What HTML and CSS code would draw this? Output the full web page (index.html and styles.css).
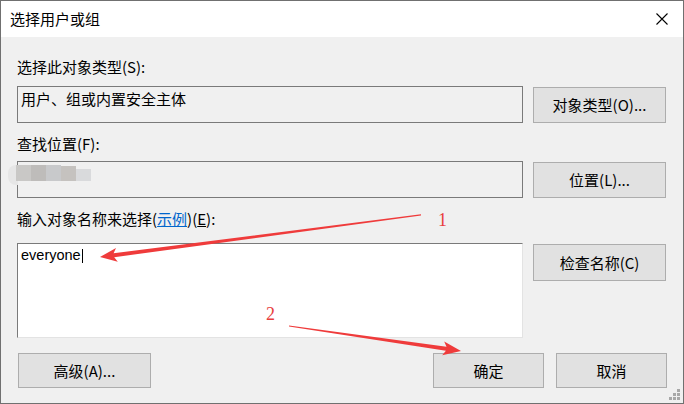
FILE: index.html
```html
<!DOCTYPE html>
<html lang="zh-CN">
<head>
<meta charset="utf-8">
<title>选择用户或组</title>
<link rel="stylesheet" href="styles.css">
</head>
<body>
<div class="window">
  <div class="titlebar">
    <span class="title">选择用户或组</span>
    <svg class="close" width="12" height="12" viewBox="0 0 12 12"><path d="M0.5 0.5 L11.5 11.5 M11.5 0.5 L0.5 11.5" stroke="#000" stroke-width="1.1" fill="none"/></svg>
  </div>
  <div class="content">
    <div class="label l1">选择此对象类型(S):</div>
    <div class="row r1">
      <div class="field">用户、组或内置安全主体</div>
      <button class="btn">对象类型(O)...</button>
    </div>
    <div class="label l2">查找位置(F):</div>
    <div class="row r2">
      <div class="field"></div>
      <button class="btn">位置(L)...</button>
    </div>
    <div class="label l3">输入对象名称来选择(<span class="link">示例</span>)(<u>E</u>):</div>
    <div class="row r3">
      <div class="textarea">everyone<span class="caret"></span></div>
      <button class="btn">检查名称(C)</button>
    </div>
    <div class="footer">
      <button class="btn wide">高级(A)...</button>
      <div class="spacer"></div>
      <button class="btn narrow">确定</button>
      <button class="btn narrow">取消</button>
    </div>
  </div>

  <div class="blur">
    <span class="b0"></span><span class="b1"></span><span class="b2"></span><span class="b3"></span><span class="b4"></span><span class="b5"></span>
  </div>

  <svg class="annot" width="684" height="404" viewBox="0 0 684 404">
    <polygon fill="#ef3b3b" points="421,214.3 113.6,253.2 116,247.9 100,257 117.8,261.7 114.2,257.2 421,215.6"/>
    <polygon fill="#ef3b3b" points="289,325.4 446.5,346.8 444.2,341.5 461,351 442.2,355.3 445.9,350.8 289,326.6"/>
  </svg>
  <span class="num n1">1</span>
  <span class="num n2">2</span>

  <svg class="grip" width="12" height="12" viewBox="0 0 12 12">
    <rect x="8" y="0" width="3" height="3" fill="#a8a8a8"/>
    <rect x="4" y="4" width="3" height="3" fill="#a8a8a8"/>
    <rect x="8" y="4" width="3" height="3" fill="#a8a8a8"/>
    <rect x="0" y="8" width="3" height="3" fill="#a8a8a8"/>
    <rect x="4" y="8" width="3" height="3" fill="#a8a8a8"/>
    <rect x="8" y="8" width="3" height="3" fill="#a8a8a8"/>
  </svg>
</div>
</body>
</html>
```
FILE: styles.css
```css
* { box-sizing: border-box; }
html, body { margin: 0; padding: 0; }
body {
  width: 684px;
  height: 404px;
  overflow: hidden;
  font-family: "Noto Sans CJK SC", sans-serif;
  font-size: 15px;
  color: #000;
  background: #6f6f6f;
}
.window {
  position: relative;
  width: 684px;
  height: 404px;
  border: 1px solid #707070;
  display: flex;
  flex-direction: column;
}
.titlebar {
  height: 36px;
  background: #fff;
  display: flex;
  align-items: center;
  padding: 0 15px 0 9px;
  justify-content: space-between;
}
.title {
  line-height: 20px;
  font-size: 15px;
}
.close { display: block; margin-top: -1px; }
.content {
  flex: 1;
  background: #f0f0f0;
  padding: 20px 16px 0 16px;
  display: flex;
  flex-direction: column;
}
.label {
  line-height: 20px;
  height: 20px;
  white-space: nowrap;
}
.l2, .l3 { margin-top: 11px; }
.link { color: #0066cc; text-decoration: underline; }
u { text-decoration: underline; }
.row {
  display: flex;
  gap: 10px;
  align-items: flex-start;
}
.r1 { margin-top: 9px; }
.r2 { margin-top: 7px; }
.r3 { margin-top: 14px; }
.field {
  width: 506px;
  height: 37px;
  border: 1px solid #7a7a7a;
  background: #f0f0f0;
  padding: 2px 3px;
  line-height: 20px;
  white-space: nowrap;
}
.btn {
  font-family: inherit;
  font-size: 15px;
  color: #000;
  background: #e1e1e1;
  border: 1px solid #adadad;
  border-radius: 0;
  padding: 0;
  width: 133px;
  height: 36px;
  line-height: 20px;
  margin-top: 1px;
}
.r3 .btn { height: 37px; }
.textarea {
  width: 506px;
  height: 95px;
  background: #fff;
  border: 1px solid;
  border-color: #7a7a7a #e3e3e3 #e3e3e3 #7a7a7a;
  padding: 1px 3px;
  line-height: 20px;
  font-family: "Liberation Sans", "Noto Sans CJK SC", sans-serif;
  font-size: 14.5px;
}
.caret {
  display: inline-block;
  width: 1px;
  height: 14px;
  background: #000;
  vertical-align: -3px;
  margin-left: 1px;
}
.footer {
  margin-top: 15px;
  display: flex;
  gap: 12px;
}
.footer .btn { height: 35px; margin-top: 0; }
.footer .wide { width: 133px; margin-left: 1px; }
.footer .narrow { width: 111px; }
.spacer { flex: 1; }

.blur {
  position: absolute;
  left: 7px;
  top: 163px;
  width: 84px;
  height: 21px;
  filter: blur(0.6px);
}
.blur span { position: absolute; display: block; }
.b0 { left: 0; top: 1px; width: 10px; height: 20px; background: #e6e6e6; border-radius: 8px 0 0 8px; }
.b1 { left: 8px; top: 1px; width: 15px; height: 16px; background: #c9c8c6; }
.b2 { left: 23px; top: 1px; width: 15px; height: 16px; background: #bebcba; }
.b3 { left: 38px; top: 1px; width: 15px; height: 16px; background: #c8c9cb; }
.b4 { left: 53px; top: 2px; width: 15px; height: 15px; background: #c5c2bf; }
.b5 { left: 68px; top: 5px; width: 15px; height: 12px; background: #d9dadc; }

.annot {
  position: absolute;
  left: -1px;
  top: -1px;
  pointer-events: none;
}
.num {
  position: absolute;
  font-family: "Liberation Serif", serif;
  color: #e83c3c;
  font-size: 18px;
  line-height: 18px;
}
.n1 { left: 437px; top: 210px; }
.n2 { left: 265px; top: 304px; }
.grip {
  position: absolute;
  right: 2px;
  bottom: 2px;
}
```
